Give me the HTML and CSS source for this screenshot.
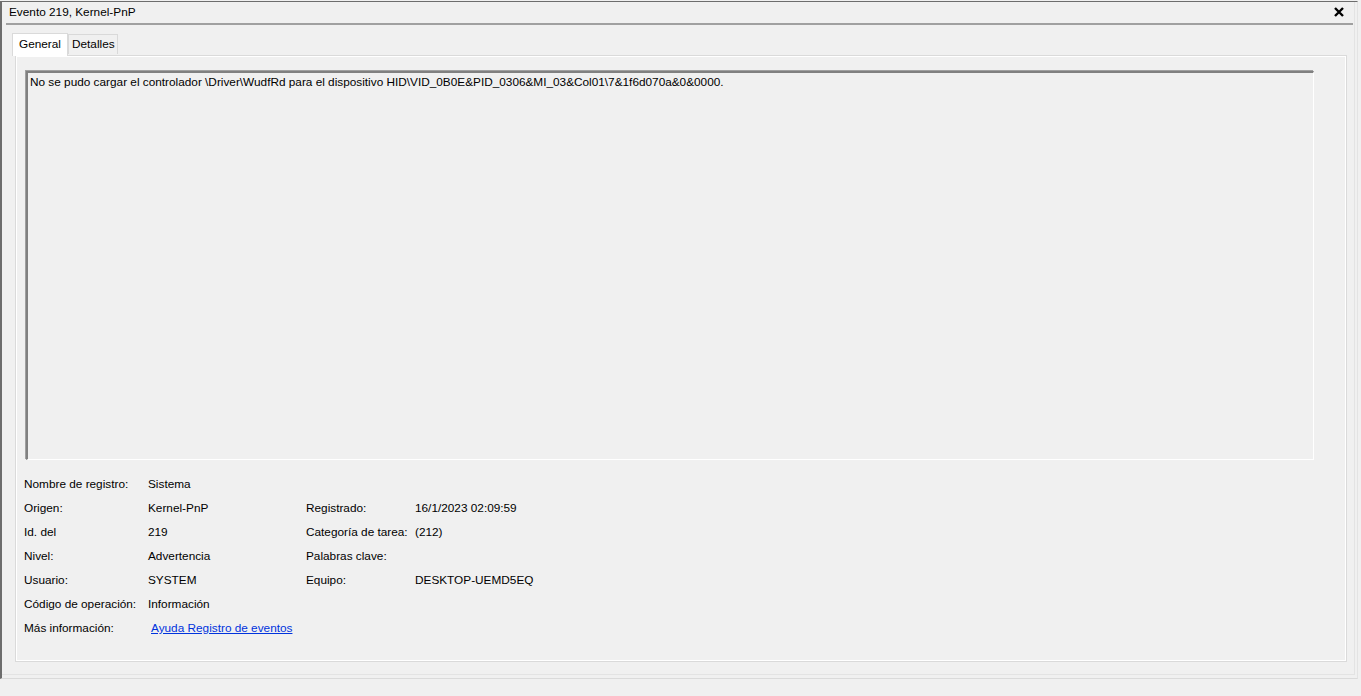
FILE: index.html
```html
<!DOCTYPE html>
<html lang="es">
<head>
  <meta charset="UTF-8">
  <title>Evento 219, Kernel-PnP</title>
  <link rel="stylesheet" href="styles.css">
</head>
<body>
  <div class="window">
    <div class="titlebar">
      <span class="title">Evento 219, Kernel-PnP</span>
      <svg class="close" width="10" height="10" viewBox="0 0 10 10">
        <path d="M1 1 L9 9 M9 1 L1 9" stroke="#000" stroke-width="2.4" fill="none"/>
      </svg>
    </div>

    <div class="tabs">
      <div class="tab active">General</div>
      <div class="tab">Detalles</div>
    </div>

    <div class="panel">
      <div class="message">No se pudo cargar el controlador \Driver\WudfRd para el dispositivo HID\VID_0B0E&amp;PID_0306&amp;MI_03&amp;Col01\7&amp;1f6d070a&amp;0&amp;0000.</div>

      <div class="props">
        <span>Nombre de registro:</span><span>Sistema</span><span></span><span></span>
        <span>Origen:</span><span>Kernel-PnP</span><span>Registrado:</span><span>16/1/2023 02:09:59</span>
        <span>Id. del</span><span>219</span><span>Categoría de tarea:</span><span>(212)</span>
        <span>Nivel:</span><span>Advertencia</span><span>Palabras clave:</span><span></span>
        <span>Usuario:</span><span>SYSTEM</span><span>Equipo:</span><span>DESKTOP-UEMD5EQ</span>
        <span>Código de operación:</span><span>Información</span><span></span><span></span>
        <span>Más información:</span><span><a class="link" href="#">Ayuda Registro de eventos</a></span><span></span><span></span>
      </div>
    </div>
  </div>
</body>
</html>
```

FILE: styles.css
```css
* {
  margin: 0;
  padding: 0;
  box-sizing: border-box;
}

body {
  background: #f0f0f0;
  font-family: 'Liberation Sans', Arial, sans-serif;
  font-size: 11.8px;
  color: #000;
}

.window {
  width: 1358px;
  height: 678px;
  margin-top: 1px;
  border-top: 1px solid #6d6d6d;
  border-left: 2px solid #6d6d6d;
  border-right: 1px solid #e3e3e3;
  border-bottom: 1px solid #dadada;
  box-shadow: inset -2px -3px 0 #f0f0f0, inset -3px -4px 0 #e3e3e3;
}

.titlebar {
  height: 23px;
  margin: 0 4px 0 4px;
  border-bottom: 2px solid #a0a0a0;
  display: flex;
  align-items: center;
  justify-content: space-between;
  padding: 0 9px 1px 3px;
}

.close {
  display: block;
}

.tabs {
  display: flex;
  align-items: flex-end;
  height: 30px;
  padding-left: 10px;
}

.tab {
  height: 20px;
  padding: 0 2px 0 3px;
  border: 1px solid #d9d9d9;
  border-bottom: none;
  background: #f0f0f0;
  line-height: 19px;
  margin-bottom: 1px;
}

.tab.active {
  height: 23px;
  background: #fff;
  border-color: #dadada;
  padding: 0 6px;
  margin-bottom: -1px;
  position: relative;
  z-index: 1;
  line-height: 20px;
}

.panel {
  margin-left: 13px;
  width: 1332px;
  height: 607px;
  border: 1px solid #dadada;
  box-shadow: inset 1px 1px 0 #fff, inset -1px -1px 0 #fff;
  padding: 15px 32px 0 10px;
}

.message {
  height: 389px;
  border-top: 2px solid #808080;
  border-left: 2px solid #808080;
  border-right: 1px solid #fff;
  border-bottom: 1px solid #fff;
  box-shadow: -1px -1px 0 #a0a0a0;
  padding: 1px 2px;
  line-height: 16px;
}

.props {
  display: grid;
  grid-template-columns: 124px 158px 109px auto;
  grid-auto-rows: 24px;
  align-items: center;
  margin-top: 12px;
  margin-left: -2px;
}

.link {
  color: #0033dd;
  margin-left: 3px;
}
```
